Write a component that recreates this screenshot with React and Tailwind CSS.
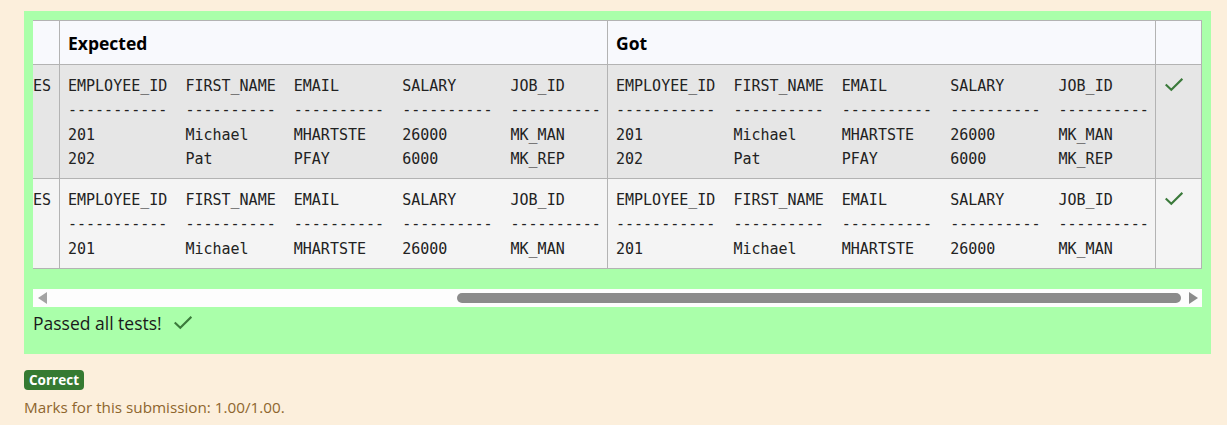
import { useState } from "react";

const mono = { fontFamily: '"DejaVu Sans Mono", "Liberation Mono", monospace' };

const HEAD = "EMPLOYEE_ID  FIRST_NAME  EMAIL       SALARY      JOB_ID";
const DASH = "-----------  ----------  ----------  ----------  ----------";

const rows = [
  {
    test: "SELECT employee_id, first_name, email, salary, job_id FROM EMPLOYEES",
    lines: [
      HEAD,
      DASH,
      "201          Michael     MHARTSTE    26000       MK_MAN",
      "202          Pat         PFAY        6000        MK_REP",
    ],
    bg: "bg-[#e6e6e6]",
  },
  {
    test: "SELECT employee_id, first_name, email, salary, job_id FROM EMPLOYEES",
    lines: [HEAD, DASH, "201          Michael     MHARTSTE    26000       MK_MAN"],
    bg: "bg-[#f4f4f4]",
  },
];

const Tick = ({ className = "" }) => (
  <svg width="18" height="14" viewBox="0 0 18 14" className={className}>
    <path
      d="M1.5 7.2 L6.3 11.8 L16.6 1.6"
      fill="none"
      stroke="#3b7a3b"
      strokeWidth="2.1"
      strokeLinecap="square"
    />
  </svg>
);

const Pre = ({ lines }) => (
  <pre className="m-0 whitespace-pre text-[15px] leading-[24.25px] text-[#222]" style={mono}>
    {lines.join("\n")}
  </pre>
);

function ResultTable() {
  const cell = "border-r border-b border-[#b3b3b3]";
  return (
    <div className="overflow-hidden">
      <div className="ml-[-657px] mb-5 grid w-[1826px] grid-cols-[684px_548px_548px_46px] border-t border-[#b3b3b3]">
        <div className={`${cell} bg-[#f8f9fd]`} />
        <div className={`${cell} bg-[#f8f9fd] px-2 pb-[8px] pt-[10px] text-[17.5px] font-bold leading-[25px] text-black`}>
          Expected
        </div>
        <div className={`${cell} bg-[#f8f9fd] px-2 pb-[8px] pt-[10px] text-[17.5px] font-bold leading-[25px] text-black`}>
          Got
        </div>
        <div className={`${cell} bg-[#f8f9fd]`} />

        {rows.map((r, i) => (
          <div key={i} className="contents">
            <div className={`${cell} ${r.bg} pb-[7px] pr-2 pt-[9px] text-right`}>
              <pre className="m-0 whitespace-pre text-[15px] leading-[24.25px] text-[#222]" style={mono}>
                {r.test}
              </pre>
            </div>
            <div className={`${cell} ${r.bg} px-2 pb-[7px] pt-[9px]`}>
              <Pre lines={r.lines} />
            </div>
            <div className={`${cell} ${r.bg} px-2 pb-[7px] pt-[9px]`}>
              <Pre lines={r.lines} />
            </div>
            <div className={`${cell} ${r.bg} pl-[9px] pt-[13px]`}>
              <Tick />
            </div>
          </div>
        ))}
      </div>
    </div>
  );
}

function FakeScrollbar() {
  return (
    <div className="flex h-[18px] items-center bg-[#fdfdfd]">
      <div className="flex w-[18px] justify-center">
        <div className="h-0 w-0 border-y-[6px] border-r-[9px] border-y-transparent border-r-[#a3a3a3]" />
      </div>
      <div className="flex flex-1 items-center pl-[406px] pr-[3px]">
        <div className="h-[10px] flex-1 rounded-full bg-[#8b8b8b]" />
      </div>
      <div className="flex w-[18px] justify-center">
        <div className="h-0 w-0 border-y-[6px] border-l-[9px] border-y-transparent border-l-[#8b8b8b]" />
      </div>
    </div>
  );
}

export default function App() {
  const [marks] = useState("1.00/1.00");
  return (
    <div
      className="min-h-[425px] bg-[#fcefdc] pl-6 pr-4 pt-[11px]"
      style={{ fontFamily: '"Open Sans", "Noto Sans", sans-serif' }}
    >
      <div className="w-[1187px] bg-[#aaffaa] px-[9px] pb-[19px] pt-[9px]">
        <ResultTable />
        <FakeScrollbar />
        <div className="mt-1 flex items-center gap-3 text-[17.5px] leading-6 text-[#1a1a1a]">
          <span>Passed all tests!</span>
          <Tick />
        </div>
      </div>
      <div className="mt-4 flex h-5 w-fit items-center rounded bg-[#357a32] px-[5px] text-[13.5px] font-bold text-white">
        Correct
      </div>
      <div className="mt-[6px] text-[15.25px] leading-[22px] text-[#8e662e]">
        Marks for this submission: {marks}.
      </div>
    </div>
  );
}
